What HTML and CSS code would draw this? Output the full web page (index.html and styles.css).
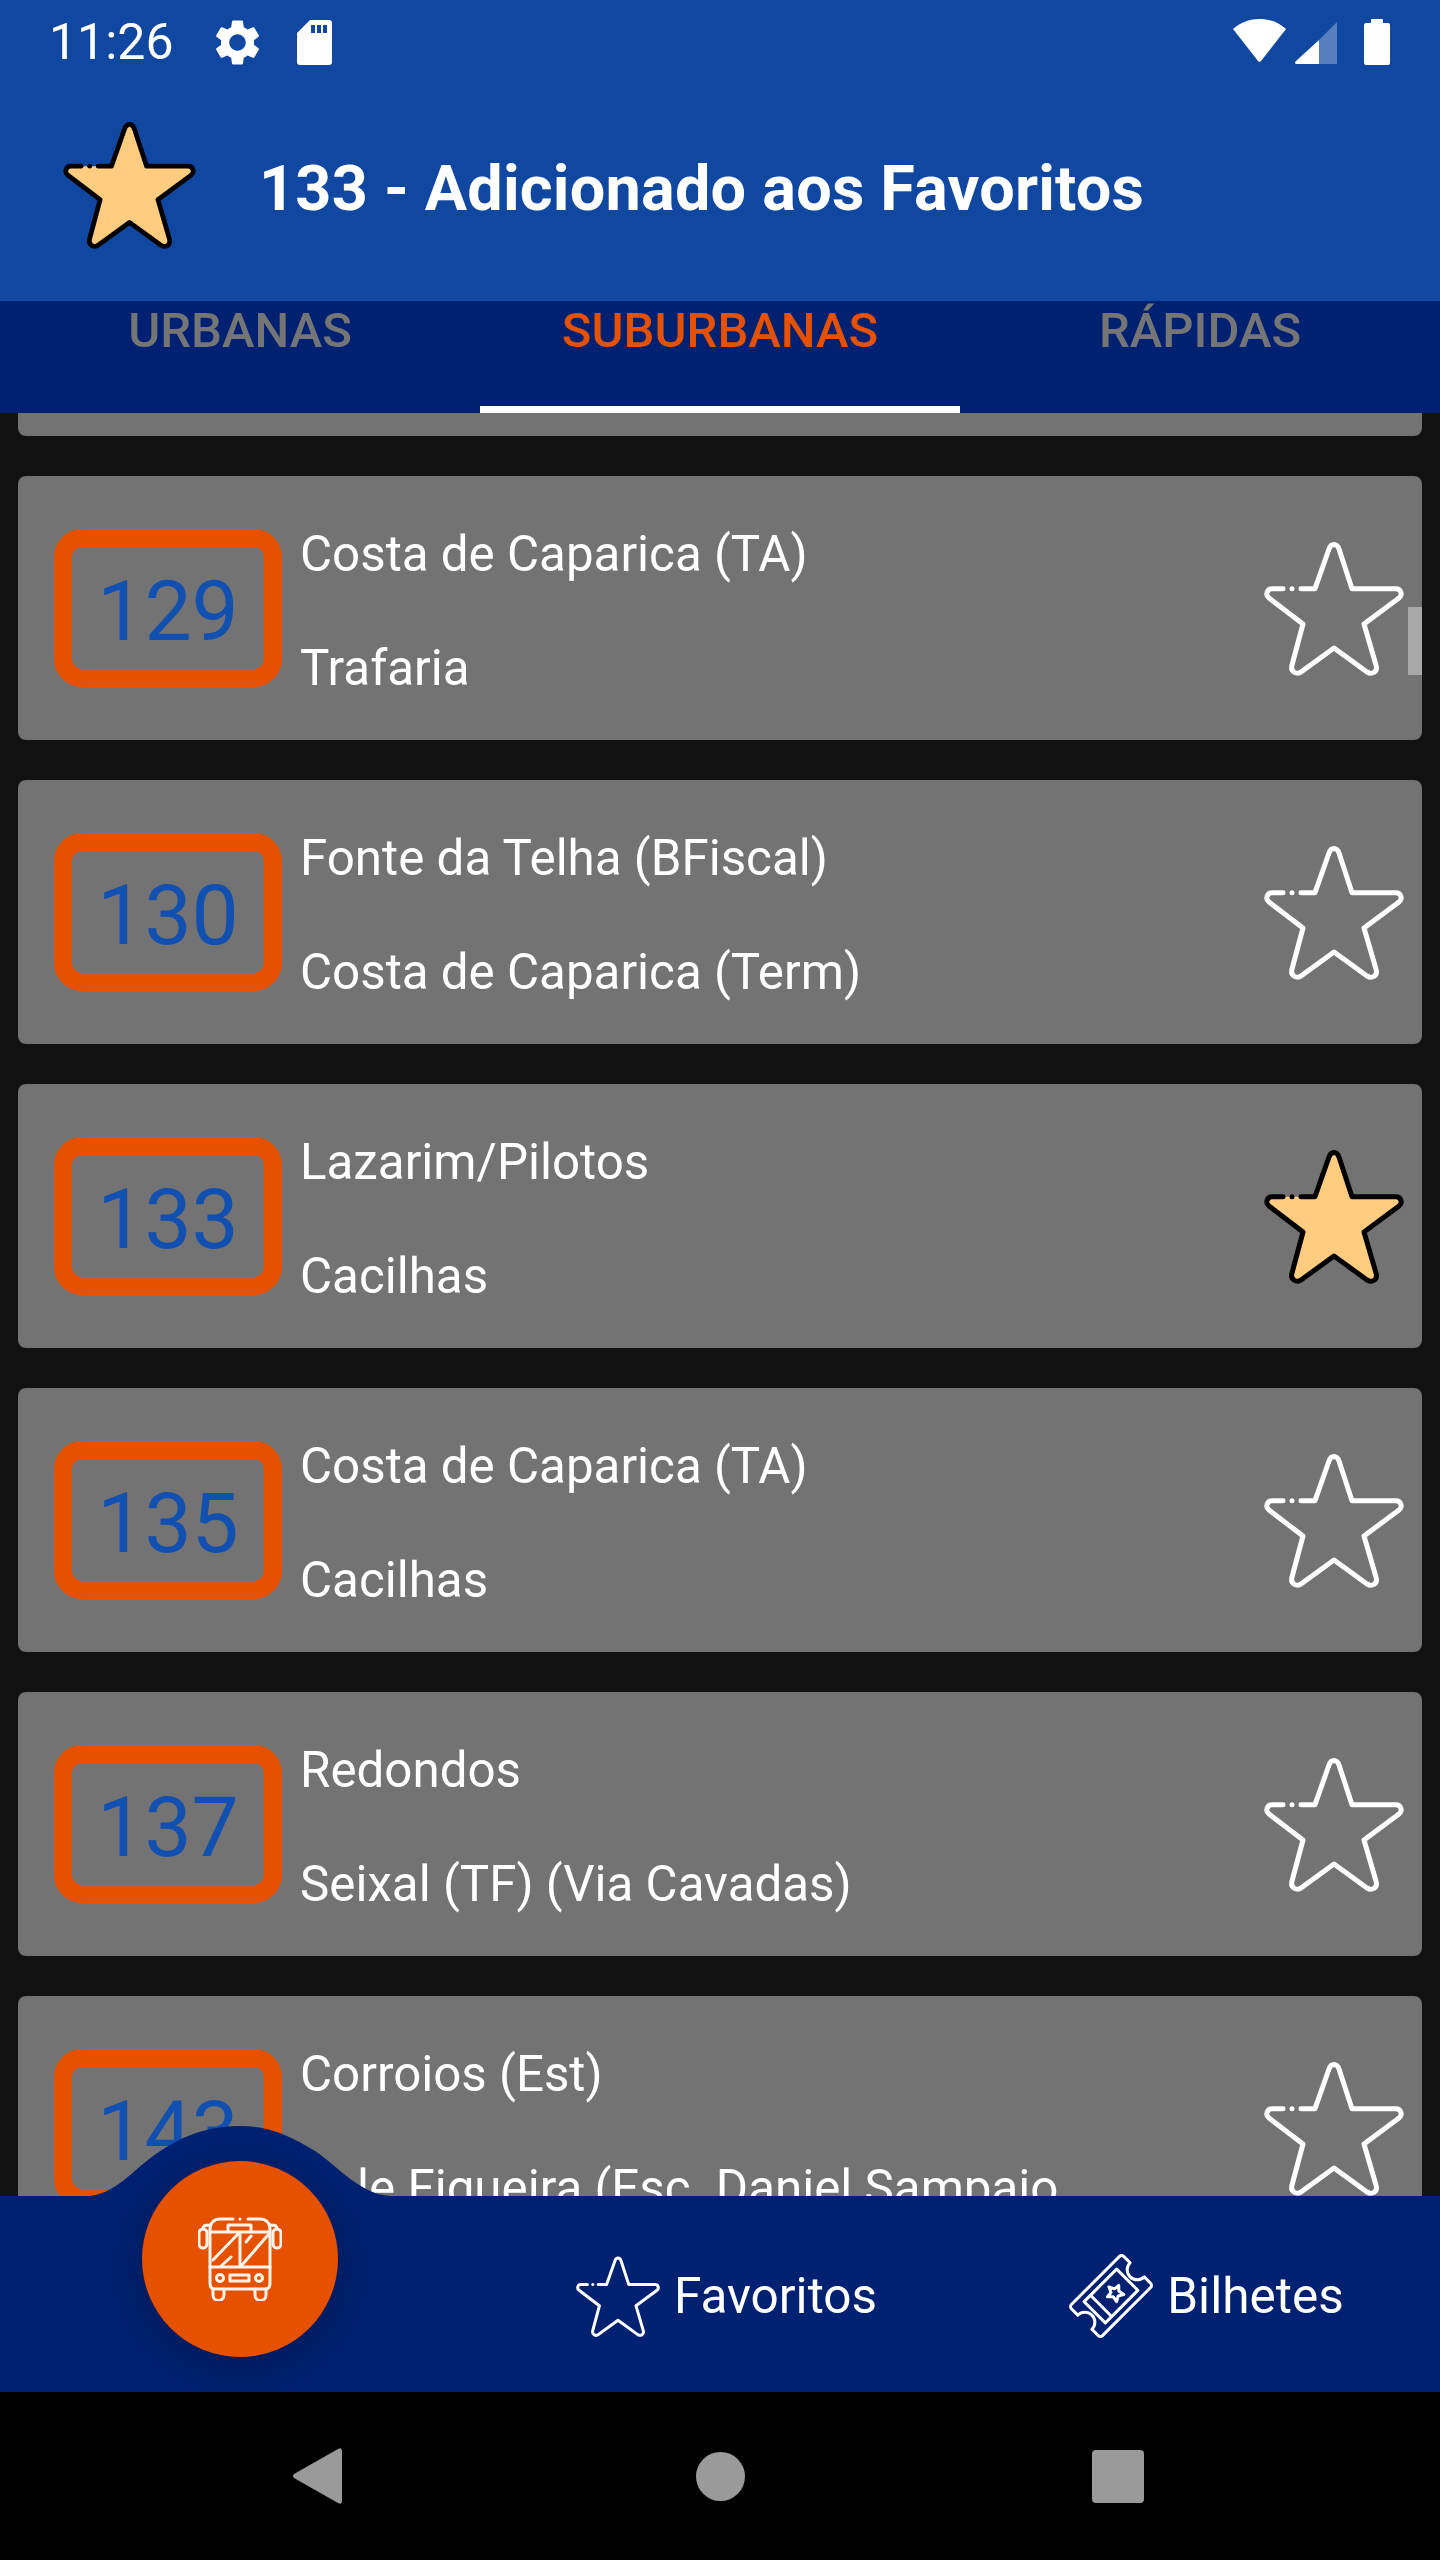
FILE: index.html
```html
<!DOCTYPE html>
<html lang="pt">
<head>
    <meta charset="UTF-8">
    <meta name="viewport" content="width=device-width, initial-scale=1.0">
    <title>Carreiras</title>
    <link rel="stylesheet" href="styles.css">
</head>
<body>
    <svg class="icon-defs" xmlns="http://www.w3.org/2000/svg">
        <symbol id="star" viewBox="0 0 140 135">
            <path d="M19 47.7H8C3 47.7 1 54 5 57L39 83L28 124C26 131 33 134 37 131L70 107L103 131C108 134 114 131 112 124L100 83L135 57C139 54 137 47.7 132 47.7H88L75 8C73 2 67 2 65 8L51 47.7H37"/>
            <path d="M28 47.7h.01"/>
        </symbol>
    </svg>

    <header class="top">
        <div class="status-bar">
            <span class="clock">11:26</span>
            <svg class="gear" viewBox="0 0 24 24"><path d="M19.14 12.94c.04-.3.06-.61.06-.94 0-.32-.02-.64-.07-.94l2.03-1.58c.18-.14.23-.41.12-.61l-1.92-3.32c-.12-.22-.37-.29-.59-.22l-2.39.96c-.5-.38-1.03-.7-1.62-.94l-.36-2.54c-.04-.24-.24-.41-.48-.41h-3.84c-.24 0-.43.17-.47.41l-.36 2.54c-.59.24-1.13.57-1.62.94l-2.39-.96c-.22-.08-.47 0-.59.22L2.74 8.87c-.12.21-.08.47.12.61l2.03 1.58c-.05.3-.09.63-.09.94s.02.64.07.94l-2.03 1.58c-.18.14-.23.41-.12.61l1.92 3.32c.12.22.37.29.59.22l2.39-.96c.5.38 1.03.7 1.62.94l.36 2.54c.05.24.24.41.48.41h3.84c.24 0 .44-.17.47-.41l.36-2.54c.59-.24 1.13-.56 1.62-.94l2.39.96c.22.08.47 0 .59-.22l1.92-3.32c.12-.22.07-.47-.12-.61l-2.01-1.58zM12 15.6c-1.98 0-3.6-1.62-3.6-3.6s1.62-3.6 3.6-3.6 3.6 1.62 3.6 3.6-1.62 3.6-3.6 3.6z"/></svg>
            <svg class="sd" viewBox="0 0 35 45"><path fill-rule="evenodd" d="M13 0H32a3 3 0 0 1 3 3V42a3 3 0 0 1-3 3H3a3 3 0 0 1-3-3V13ZM14 5V13H18V5ZM20 5V13H24V5ZM26 5V13H30V5Z"/></svg>
            <span class="status-right">
                <svg class="wifi" viewBox="0 0 53 43"><path d="M0 10C8 3 17 0 26.5 0S45 3 53 10L28 42a2 2 0 0 1-3 0Z"/></svg>
                <svg class="signal" viewBox="0 0 42 42"><path d="M24 18L42 0V42H24Z" opacity=".3"/><path d="M24 18V42H1Q-1 41 1 39Z"/></svg>
                <svg class="battery" viewBox="0 0 26 46"><path d="M7 4V1a1 1 0 0 1 1-1H18a1 1 0 0 1 1 1V4H24a2 2 0 0 1 2 2V44a2 2 0 0 1-2 2H2a2 2 0 0 1-2-2V6a2 2 0 0 1 2-2Z"/></svg>
            </span>
        </div>
        <div class="app-bar">
            <svg class="star star-on header-star"><use href="#star"/></svg>
            <h1>133 - Adicionado aos Favoritos</h1>
        </div>
    </header>

    <nav class="tabs">
        <a class="tab">URBANAS</a>
        <a class="tab active">SUBURBANAS</a>
        <a class="tab">RÁPIDAS</a>
    </nav>

    <main class="list">
        <div class="card-stub"></div>

        <div class="card">
            <div class="badge">129</div>
            <div class="route"><span>Costa de Caparica (TA)</span><span>Trafaria</span></div>
            <svg class="star star-off"><use href="#star"/></svg>
        </div>
        <div class="card">
            <div class="badge">130</div>
            <div class="route"><span>Fonte da Telha (BFiscal)</span><span>Costa de Caparica (Term)</span></div>
            <svg class="star star-off"><use href="#star"/></svg>
        </div>
        <div class="card">
            <div class="badge">133</div>
            <div class="route"><span>Lazarim/Pilotos</span><span>Cacilhas</span></div>
            <svg class="star star-on"><use href="#star"/></svg>
        </div>
        <div class="card">
            <div class="badge">135</div>
            <div class="route"><span>Costa de Caparica (TA)</span><span>Cacilhas</span></div>
            <svg class="star star-off"><use href="#star"/></svg>
        </div>
        <div class="card">
            <div class="badge">137</div>
            <div class="route"><span>Redondos</span><span>Seixal (TF) (Via Cavadas)</span></div>
            <svg class="star star-off"><use href="#star"/></svg>
        </div>
        <div class="card">
            <div class="badge">143</div>
            <div class="route"><span>Corroios (Est)</span><span>Vale Figueira (Esc. Daniel Sampaio</span></div>
            <svg class="star star-off"><use href="#star"/></svg>
        </div>

        <div class="scrollbar"></div>
    </main>

    <footer class="bottom-bar">
        <svg class="bump" viewBox="0 0 300 70"><path d="M0 70C30 66 45 40 75 22C100 6 125 0 150 0C180 0 200 10 225 25C250 42 270 68 300 70Z"/></svg>
        <button class="fab">
            <svg class="bus" viewBox="0 0 84 84">
                <path d="M35 2H22C16 2 12 6 12 12V66C12 70 14 72 17 72H67C70 72 72 70 72 66V12C72 6 68 2 62 2H50M42 2h.01"/>
                <path d="M12 15H72M12 50H72M42 15V50M30 15V8H53V15"/>
                <path d="M15 43L40 17M23 49L33 40M44 48L70 18M48 25L53 19"/>
                <rect x="1" y="12" width="8" height="19" rx="4"/>
                <rect x="75" y="12" width="8" height="19" rx="4"/>
                <path d="M5 12C5 8 8 8 12 8M79 12C79 8 76 8 72 8"/>
                <circle cx="22" cy="61" r="3.5"/>
                <circle cx="61" cy="61" r="3.5"/>
                <rect x="32" y="58" width="19" height="6"/>
                <path d="M15 72V78A5.5 5.5 0 0 0 26 78V72M57 72V78A5.5 5.5 0 0 0 68 78V72"/>
            </svg>
        </button>
        <div class="bar-slot"></div>
        <a class="bar-item">
            <svg class="star star-off star-small"><use href="#star"/></svg>
            <span>Favoritos</span>
        </a>
        <a class="bar-item">
            <svg class="ticket" viewBox="0 0 84 84">
                <g transform="translate(42 42) rotate(-45)">
                    <path d="M-34 -22H34A3 3 0 0 1 37 -19V-10A10 10 0 0 0 37 10V19A3 3 0 0 1 34 22H-34A3 3 0 0 1 -37 19V10A10 10 0 0 0 -37 -10V-19A3 3 0 0 1 -34 -22Z"/>
                    <rect x="-23" y="-15" width="46" height="30"/>
                    <path d="M-14 -15V15"/>
                    <path d="M5 -8L7.5 -2.5L13 -2L9 2L10 8L5 5L0 8L1 2L-3 -2L2.500 -2.500Z"/>
                </g>
            </svg>
            <span>Bilhetes</span>
        </a>
    </footer>

    <div class="nav-bar">
        <svg class="nav-back" viewBox="0 0 49 56"><path d="M1 26L45 1Q49 -1 49 3V53Q49 57 45 55L1 30Q-1 28 1 26Z"/></svg>
        <div class="nav-home"></div>
        <div class="nav-recent"></div>
    </div>
</body>
</html>
```

FILE: styles.css
```css
* {
    box-sizing: border-box;
}
body {
    margin: 0;
    width: 1440px;
    height: 2560px;
    display: flex;
    flex-direction: column;
    overflow: hidden;
    background-color: #121212;
    color: #fff;
    font-family: Roboto, sans-serif;
}
.icon-defs {
    display: none;
}

/* header */
.top {
    background-color: #0f47a1;
}
.status-bar {
    height: 84px;
    display: flex;
    align-items: center;
    padding: 0 50px 0 49px;
    fill: #fff;
}
.clock {
    font-size: 50px;
    width: 156px;
}
.gear {
    width: 55px;
    height: 55px;
    margin-left: 5px;
}
.sd {
    width: 35px;
    height: 45px;
    margin-left: 32px;
}
.status-right {
    margin-left: auto;
    display: flex;
    align-items: flex-start;
}
.wifi {
    width: 53px;
    height: 43px;
}
.signal {
    width: 42px;
    height: 42px;
    margin: 3px 0 0 9px;
}
.battery {
    width: 26px;
    height: 46px;
    margin-left: 27px;
}
.app-bar {
    height: 217px;
    display: flex;
    align-items: center;
    padding: 0 0 15px 63px;
}
.app-bar h1 {
    margin: 6px 0 0 63px;
    font-size: 63px;
    font-weight: 700;
    letter-spacing: 0.2px;
}

/* stars */
.star {
    width: 140px;
    height: 135px;
    stroke-width: 5;
    stroke-linecap: round;
    stroke-linejoin: round;
    flex-shrink: 0;
}
.star-off {
    fill: none;
    stroke: #fff;
}
.star-on {
    fill: #ffcc80;
    stroke: #000;
}
.header-star {
    width: 133px;
    height: 128px;
}
.star-small {
    width: 84px;
    height: 81px;
}

/* tabs */
.tabs {
    height: 112px;
    display: grid;
    grid-template-columns: repeat(3, 1fr);
    background-color: #002171;
}
.tab {
    padding-top: 1px;
    text-align: center;
    font-size: 49px;
    font-weight: 500;
    color: #757575;
}
.tab.active {
    color: #e65100;
    border-bottom: 7px solid #fff;
}

/* list */
.list {
    position: relative;
    flex: 1;
    min-height: 0;
    overflow: hidden;
    padding: 0 18px;
}
.card-stub {
    height: 23px;
    margin-bottom: 40px;
    background-color: #737373;
    border-radius: 0 0 8px 8px;
}
.card {
    height: 264px;
    margin-bottom: 40px;
    display: flex;
    align-items: center;
    padding: 0 18px 0 36px;
    background-color: #737373;
    border-radius: 8px;
}
.badge {
    width: 228px;
    height: 158px;
    flex-shrink: 0;
    display: flex;
    align-items: center;
    justify-content: center;
    padding-top: 6px;
    border: 18px solid #e65100;
    border-radius: 28px;
    font-size: 84px;
    color: #1150b0;
}
.route {
    flex: 1;
    margin-left: 18px;
    padding-top: 6px;
    display: flex;
    flex-direction: column;
    font-size: 49.3px;
    line-height: 114px;
    white-space: nowrap;
}
.scrollbar {
    position: absolute;
    top: 194px;
    right: 18px;
    width: 14px;
    height: 68px;
    background-color: #a8a8a8;
}

/* bottom bar */
.bottom-bar {
    position: relative;
    height: 196px;
    flex-shrink: 0;
    display: grid;
    grid-template-columns: repeat(3, 480px);
    background-color: #002171;
}
.bump {
    position: absolute;
    left: 90px;
    bottom: 100%;
    width: 300px;
    height: 70px;
    fill: #002171;
}
.fab {
    position: absolute;
    left: 142px;
    top: -35px;
    width: 196px;
    height: 196px;
    padding: 0;
    border: none;
    border-radius: 50%;
    display: flex;
    align-items: center;
    justify-content: center;
    background-color: #e65100;
    box-shadow: 0 10px 40px rgba(0, 0, 0, 0.25);
}
.bus {
    width: 84px;
    height: 84px;
    fill: none;
    stroke: #fff3ec;
    stroke-width: 3;
    stroke-linecap: round;
    stroke-linejoin: round;
}
.bar-item {
    display: flex;
    align-items: center;
    justify-content: center;
    gap: 14px;
    padding: 4px 0 0 13px;
    font-size: 49.5px;
}
.ticket {
    width: 84px;
    height: 84px;
    fill: none;
    stroke: #fff;
    stroke-width: 3;
    stroke-linejoin: round;
}

/* android nav */
.nav-bar {
    height: 168px;
    flex-shrink: 0;
    display: flex;
    align-items: center;
    justify-content: space-between;
    padding: 0 296px 0 293px;
    background-color: #000;
}
.nav-back {
    width: 49px;
    height: 56px;
    fill: #9a9a9a;
}
.nav-home {
    width: 49px;
    height: 49px;
    margin-left: 6px;
    border-radius: 50%;
    background-color: #9a9a9a;
}
.nav-recent {
    width: 52px;
    height: 53px;
    border-radius: 4px;
    background-color: #9a9a9a;
}
```
